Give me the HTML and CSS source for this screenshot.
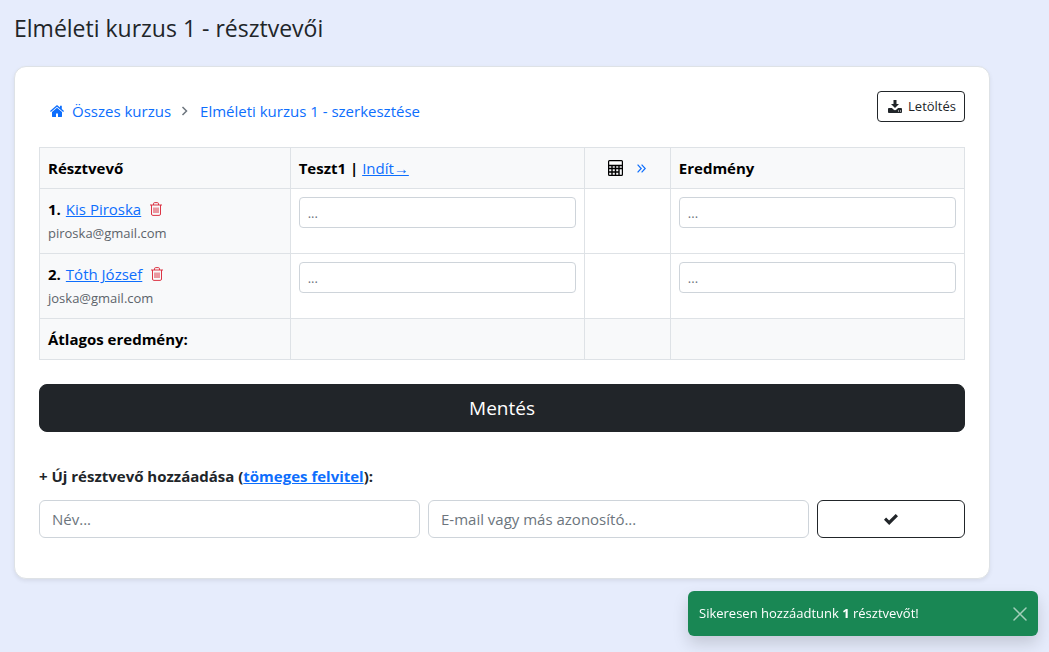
FILE: index.html
```html
<!DOCTYPE html>
<html lang="hu">
<head>
<meta charset="utf-8">
<meta name="viewport" content="width=device-width, initial-scale=1">
<title>Elméleti kurzus 1 - résztvevői</title>
<link rel="stylesheet" href="styles.css">
</head>
<body>
<main class="page">
  <h1 class="page-title">Elméleti kurzus 1 - résztvevői</h1>
  <section class="card">
    <div class="card-top">
      <nav class="breadcrumb" aria-label="Navigáció">
        <a href="#"><svg class="icon-home" viewBox="0 0 14 12" aria-hidden="true"><path fill="currentColor" d="M7 0 0 6l.8 1L7 1.8 13.200 7l.8-1-2.200-1.900V.8H10v1.800zM7 2.800 2 7v4.500c0 .3.200.5.500.5H6V8.500h2V12h3.500c.3 0 .5-.2.5-.5V7z"/></svg>Összes kurzus</a>
        <svg class="icon-chevron" viewBox="0 0 8 12" aria-hidden="true"><path fill="none" stroke="currentColor" stroke-width="1.500" d="M1.500 2 5.500 6l-4 4"/></svg>
        <a href="#">Elméleti kurzus 1 - szerkesztése</a>
      </nav>
      <button class="btn btn-small" type="button"><svg class="icon-download" viewBox="0 0 14 13" aria-hidden="true"><path fill="currentColor" d="M5.500 0h3v4H11L7 8 3 4h2.500zM0 9c0-.6.300-.9.900-.9h3L5.500 9.600q1.500 1.200 3 0l1.600-1.500h3c.6 0 .9.300.9.900v3c0 .6-.3.900-.9.900H.9C.3 12.900 0 12.600 0 12zm10 1.500v1h1v-1zm2 0v1h1v-1z"/></svg>Letöltés</button>
    </div>
    <form class="results-form">
      <table class="results">
        <colgroup><col class="col-name"><col class="col-test"><col class="col-calc"><col class="col-result"></colgroup>
        <thead>
          <tr>
            <th scope="col">Résztvevő</th>
            <th scope="col">Teszt1 | <a class="light" href="#">Indít→</a></th>
            <th scope="col">
              <span class="calc">
                <svg class="icon-calc" viewBox="0 0 15 16" aria-label="Számítás"><path fill="#fff" d="M1 1h13v4H1z"/><path fill="none" stroke="currentColor" stroke-width="1.200" d="M1.500.6h12c.6 0 .9.300.9.900v13c0 .6-.3.900-.9.900h-12c-.6 0-.9-.3-.9-.9v-13c0-.6.300-.9.900-.9z"/><path fill="none" stroke="currentColor" stroke-width="1.400" d="M.6 5.500h13.800M.6 8.500h13.800M.6 12h10M4 5.500v10M7.500 5.500v10M11 5.500v10"/></svg>
                <a class="expand" href="#" aria-label="Kibontás"><svg class="icon-double" viewBox="0 0 9 9" aria-hidden="true"><path fill="none" stroke="currentColor" stroke-width="1.200" d="m.6.6 3.600 3.900L.6 8.400M4.600.6l3.600 3.900-3.600 3.900"/></svg></a>
              </span>
            </th>
            <th scope="col">Eredmény</th>
          </tr>
        </thead>
        <tbody>
          <tr>
            <th scope="row">
              <div class="person">1. <a class="light" href="#">Kis Piroska</a><button class="delete" type="button" aria-label="Kis Piroska törlése"><svg class="icon-trash" viewBox="0 0 12 14" aria-hidden="true"><path fill="none" stroke="currentColor" d="M0 3h12M3.500 3V1.800q0-1.200 1.200-1.200h2.600q1.200 0 1.200 1.200V3M1.500 3v9q0 1.400 1.400 1.400h6.200q1.400 0 1.400-1.400V3M4 5.500v5.500M6 5.500v5.500M8 5.500v5.500"/></svg></button></div>
              <div class="email">piroska@gmail.com</div>
            </th>
            <td><input class="input input-small" type="text" placeholder="..." aria-label="Kis Piroska, Teszt1"></td>
            <td></td>
            <td><input class="input input-small" type="text" placeholder="..." aria-label="Kis Piroska, Eredmény"></td>
          </tr>
          <tr>
            <th scope="row">
              <div class="person">2. <a class="light" href="#">Tóth József</a><button class="delete" type="button" aria-label="Tóth József törlése"><svg class="icon-trash" viewBox="0 0 12 14" aria-hidden="true"><path fill="none" stroke="currentColor" d="M0 3h12M3.500 3V1.800q0-1.200 1.200-1.200h2.600q1.200 0 1.200 1.200V3M1.500 3v9q0 1.400 1.400 1.400h6.200q1.400 0 1.400-1.400V3M4 5.500v5.500M6 5.500v5.500M8 5.500v5.500"/></svg></button></div>
              <div class="email">joska@gmail.com</div>
            </th>
            <td><input class="input input-small" type="text" placeholder="..." aria-label="Tóth József, Teszt1"></td>
            <td></td>
            <td><input class="input input-small" type="text" placeholder="..." aria-label="Tóth József, Eredmény"></td>
          </tr>
        </tbody>
        <tfoot>
          <tr><th scope="row">Átlagos eredmény:</th><td></td><td></td><td></td></tr>
        </tfoot>
      </table>
      <button class="btn btn-save" type="submit">Mentés</button>
    </form>
    <form class="add-form">
      <p class="add-title">+ Új résztvevő hozzáadása (<a href="#">tömeges felvitel</a>):</p>
      <div class="add-row">
        <input class="input" type="text" placeholder="Név..." aria-label="Név">
        <input class="input" type="text" placeholder="E-mail vagy más azonosító..." aria-label="E-mail vagy más azonosító">
        <button class="btn" type="submit" aria-label="Hozzáadás"><svg class="icon-check" viewBox="0 0 14 11" aria-hidden="true"><path fill="currentColor" d="m0 5.700 2.100-2.100 3 2.900L11.700 0 14 2.200 5.200 11z"/></svg></button>
      </div>
    </form>
  </section>
</main>
<div class="toast" role="status">
  <span>Sikeresen hozzáadtunk <strong>1</strong> résztvevőt!</span>
  <button class="toast-close" type="button" aria-label="Bezárás"><svg class="icon-close" viewBox="0 0 14 14" aria-hidden="true"><path fill="none" stroke="currentColor" stroke-width="1.500" stroke-linecap="round" d="m1 1 12 12M13 1 1 13"/></svg></button>
</div>
</body>
</html>
```

FILE: styles.css
```css
*, *::before, *::after { box-sizing: border-box; }

body {
  margin: 0;
  background: #e6ecfc;
  color: #212529;
  font-family: "Segoe UI", "Open Sans", "Noto Sans", sans-serif;
  font-size: 15px;
  line-height: 24px;
}

a { color: #0d6efd; }
svg { display: block; flex: none; }
button, input { font: inherit; }

.page { padding: 12px 59px 24px 14px; }

.page-title {
  margin: 0 0 22px;
  font-size: 23px;
  font-weight: 500;
  line-height: 32px;
}

.card {
  padding: 24px 24px 40px;
  background: #fff;
  border: 1px solid #dee2e6;
  border-radius: 12px;
  box-shadow: 0 2px 4px rgba(0, 0, 0, 0.075);
}

.card-top {
  display: flex;
  justify-content: space-between;
  align-items: flex-start;
  margin-bottom: 24px;
}

.breadcrumb {
  display: flex;
  align-items: center;
  padding: 8px 11px 0;
}
.breadcrumb a {
  display: flex;
  align-items: center;
  gap: 8px;
  text-decoration: none;
}

.icon-home { width: 14px; height: 12px; }
.icon-chevron { width: 8px; height: 12px; margin: 0 11px 0 10px; color: #6c757d; }
.icon-download { width: 14px; height: 13px; }
.icon-calc { width: 15px; height: 16px; }
.icon-double { width: 9px; height: 9px; }
.icon-trash { width: 12px; height: 14px; }
.icon-check { width: 14px; height: 11px; }
.icon-close { width: 14px; height: 14px; }

.btn {
  display: flex;
  align-items: center;
  justify-content: center;
  padding: 6px 12px;
  background: #fff;
  color: #212529;
  border: 1px solid #212529;
  border-radius: 6px;
}
.btn-small {
  gap: 6px;
  padding: 4px 8px 4px 10px;
  border-radius: 4px;
  font-size: 13px;
  line-height: 21px;
}
.btn-save {
  width: 100%;
  padding: 8px 16px;
  background: #212529;
  color: #fff;
  border-radius: 8px;
  font-size: 19px;
  line-height: 30px;
}

.results {
  width: 100%;
  margin-bottom: 24px;
  border-collapse: collapse;
  table-layout: fixed;
  color: #000;
}
.col-name { width: 27.100%; }
.col-test, .col-result { width: 31.800%; }
.col-calc { width: 9.300%; }
.results th, .results td {
  padding: 8px;
  border: 1px solid #dee2e6;
  text-align: left;
  vertical-align: top;
}
.results th, .results tfoot td { background: #f8f9fa; }
.light { font-weight: 400; }

.calc {
  display: flex;
  align-items: center;
  justify-content: center;
  gap: 14px;
  height: 24px;
}

.person { display: flex; align-items: center; gap: 5px; }
.delete {
  padding: 0;
  margin-left: 4px;
  border: 0;
  background: none;
  color: #dc3545;
}
.email { color: #5c636a; font-size: 13px; font-weight: 400; }

.input {
  display: block;
  width: 100%;
  min-width: 0;
  padding: 6px 12px;
  background: #fff;
  border: 1px solid #ced4da;
  border-radius: 6px;
  color: #212529;
  line-height: 24px;
}
.input::placeholder { color: #6c757d; opacity: 1; }
.input-small {
  height: 31px;
  padding: 4px 8px;
  border-radius: 4px;
  font-size: 13px;
}

.add-title { margin: 32px 0 12px; font-weight: 700; }
.add-row {
  display: grid;
  grid-template-columns: 381fr 381fr 148fr;
  gap: 8px;
}
.add-row .input, .add-row .btn { height: 38px; }

.toast {
  position: fixed;
  right: 11px;
  bottom: 16px;
  display: flex;
  align-items: center;
  justify-content: space-between;
  width: 350px;
  padding: 12px 11px;
  background: #198754;
  color: #fff;
  border-radius: 6px;
  box-shadow: 0 8px 16px rgba(0, 0, 0, 0.15);
  font-size: 13px;
  font-weight: 500;
  line-height: 21px;
}
.toast-close { padding: 0; border: 0; background: none; color: rgba(255, 255, 255, 0.6); }
```
